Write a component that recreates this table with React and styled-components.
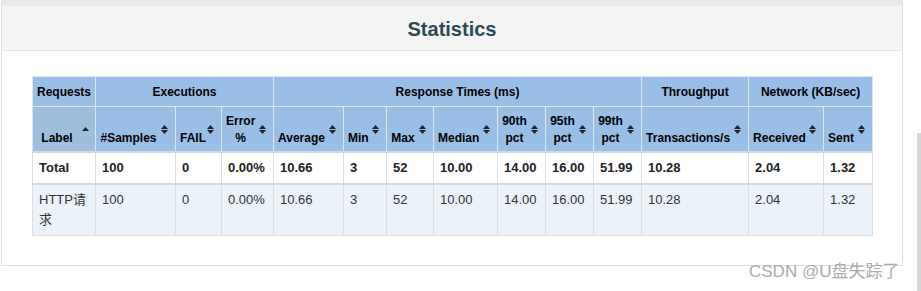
import React from 'react';
import styled, { createGlobalStyle } from 'styled-components';

const GlobalStyle = createGlobalStyle`
    html, body {
        margin: 0;
        padding: 0;
        background: #ffffff;
    }
    body {
        font-family: "Liberation Sans", Arial, "Noto Sans CJK SC", sans-serif;
        color: #333333;
    }
`;

const columns = [
    { key: 'label', title: ['Label'], width: 63, sort: 'asc' },
    { key: 'samples', title: ['#Samples'], width: 80 },
    { key: 'fail', title: ['FAIL'], width: 46 },
    { key: 'error', title: ['Error', '%'], width: 52 },
    { key: 'avg', title: ['Average'], width: 70 },
    { key: 'min', title: ['Min'], width: 43 },
    { key: 'max', title: ['Max'], width: 47 },
    { key: 'median', title: ['Median'], width: 64 },
    { key: 'p90', title: ['90th', 'pct'], width: 48 },
    { key: 'p95', title: ['95th', 'pct'], width: 48 },
    { key: 'p99', title: ['99th', 'pct'], width: 48 },
    { key: 'tps', title: ['Transactions/s'], width: 107 },
    { key: 'received', title: ['Received'], width: 75 },
    { key: 'sent', title: ['Sent'], width: 49 },
];

const groups = [
    { title: 'Requests', span: 1 },
    { title: 'Executions', span: 3 },
    { title: 'Response Times (ms)', span: 7 },
    { title: 'Throughput', span: 1 },
    { title: 'Network (KB/sec)', span: 2 },
];

const total = ['Total', '100', '0', '0.00%', '10.66', '3', '52', '10.00', '14.00', '16.00', '51.99', '10.28', '2.04', '1.32'];
const rows = [
    ['HTTP请求', '100', '0', '0.00%', '10.66', '3', '52', '10.00', '14.00', '16.00', '51.99', '10.28', '2.04', '1.32'],
];

// 정렬 아이콘 (tablesorter 스타일)
const SortIcon = ({ dir }) =>
    dir === 'asc' ? (
        <IconBox $asc>
            <svg width="7" height="4" viewBox="0 0 7 4">
                <polygon points="0,4 3.5,0 7,4" fill="#222" />
            </svg>
        </IconBox>
    ) : (
        <IconBox>
            <svg width="7" height="9" viewBox="0 0 7 9">
                <polygon points="0,4 3.5,0 7,4" fill="#222" />
                <polygon points="0,5 3.5,9 7,5" fill="#222" />
            </svg>
        </IconBox>
    );

const App = () => {
    return (
        <Page>
            <GlobalStyle />
            <Panel>
                <Heading>Statistics</Heading>
                <PanelBody>
                    <StatsTable>
                        <colgroup>
                            {columns.map((c) => (
                                <col key={c.key} style={{ width: c.width }} />
                            ))}
                        </colgroup>
                        <thead>
                            <tr>
                                {groups.map((g) => (
                                    <GroupTh key={g.title} colSpan={g.span}>
                                        {g.title}
                                    </GroupTh>
                                ))}
                            </tr>
                            <tr>
                                {columns.map((c) => (
                                    <ColTh key={c.key} $sorted={!!c.sort}>
                                        {c.title.map((line, i) => (
                                            <React.Fragment key={line}>
                                                {i > 0 && <br />}
                                                {line}
                                            </React.Fragment>
                                        ))}
                                        <SortIcon dir={c.sort} />
                                    </ColTh>
                                ))}
                            </tr>
                        </thead>
                        <TotalBody>
                            <tr>
                                {total.map((v, i) => (
                                    <TotalTd key={i}>{v}</TotalTd>
                                ))}
                            </tr>
                        </TotalBody>
                        <tbody>
                            {rows.map((r) => (
                                <DataRow key={r[0]} $odd>
                                    {r.map((v, i) => (
                                        <DataTd key={i}>{v}</DataTd>
                                    ))}
                                </DataRow>
                            ))}
                        </tbody>
                    </StatsTable>
                </PanelBody>
            </Panel>
            <Watermark>CSDN @U盘失踪了</Watermark>
            <ScrollThumb />
        </Page>
    );
};

export default App;

// Styled Components
const Page = styled.div`
    position: relative;
    height: 291px;
    padding-left: 1px;
    overflow: hidden;
`;

const Panel = styled.div`
    width: 900px;
    border: 1px solid #dddddd;
    border-top: 2px solid #e8e8e8;
    background: #ffffff;
`;

const Heading = styled.h2`
    margin: 0;
    height: 41px;
    padding-top: 3px;
    border-top: 4px solid #e4e9ee;
    border-bottom: 1px solid #e2e2e2;
    background: #f4f4f4;
    display: flex;
    align-items: center;
    justify-content: center;
    font-size: 20px;
    font-weight: bold;
    color: #2c4a50;
`;

const PanelBody = styled.div`
    padding: 25px 30px 29px 30px;
`;

const StatsTable = styled.table`
    width: 841px;
    table-layout: fixed;
    border-collapse: collapse;
    font-size: 13px;
    border: 1px solid #d4d9df;
`;

const GroupTh = styled.th`
    height: 19px;
    padding: 6px 4px 4px 4px;
    background: #99bfe6;
    border: 1px solid #dce5ef;
    color: #000000;
    font-size: 12px;
    font-weight: bold;
    line-height: 17px;
    text-align: center;
    white-space: nowrap;
`;

const ColTh = styled.th`
    position: relative;
    height: 36px;
    padding: 4px 18px 4px 4px;
    background: ${(p) => (p.$sorted ? '#9fbddc' : '#99bfe6')};
    border: 1px solid #dce5ef;
    border-bottom: 2px solid #d3d8de;
    color: #000000;
    font-size: 12px;
    font-weight: bold;
    line-height: 17px;
    text-align: center;
    vertical-align: bottom;
    white-space: nowrap;
`;

const IconBox = styled.span`
    position: absolute;
    right: ${(p) => (p.$asc ? '6px' : '7px')};
    top: 50%;
    margin-top: ${(p) => (p.$asc ? '-2px' : '-4px')};
    line-height: 0;
    svg {
        display: block;
    }
`;

const TotalBody = styled.tbody`
    border-bottom: 2px solid #d6dae0;
`;

const TotalTd = styled.td`
    padding: 5px 6px;
    height: 20px;
    line-height: 20px;
    border: 1px solid #dddddd;
    border-top: none;
    border-bottom: 2px solid #d6dae0;
    background: #ffffff;
    font-weight: bold;
    color: #222222;
    vertical-align: middle;
`;

const DataRow = styled.tr`
    background: ${(p) => (p.$odd ? '#ebf2fa' : '#ffffff')};
`;

const DataTd = styled.td`
    padding: 5px 6px;
    line-height: 20px;
    border: 1px solid #dddddd;
    color: #333333;
    vertical-align: top;
    word-break: break-all;
`;

const Watermark = styled.div`
    position: absolute;
    left: 749px;
    top: 262px;
    font-family: "Liberation Sans", Arial, "Noto Sans CJK SC", sans-serif;
    font-size: 17px;
    line-height: 20px;
    color: #ababab;
    white-space: nowrap;
`;

const ScrollThumb = styled.div`
    position: absolute;
    right: 0;
    top: 133px;
    bottom: 0;
    width: 4px;
    background: #d6d6d6;
`;
